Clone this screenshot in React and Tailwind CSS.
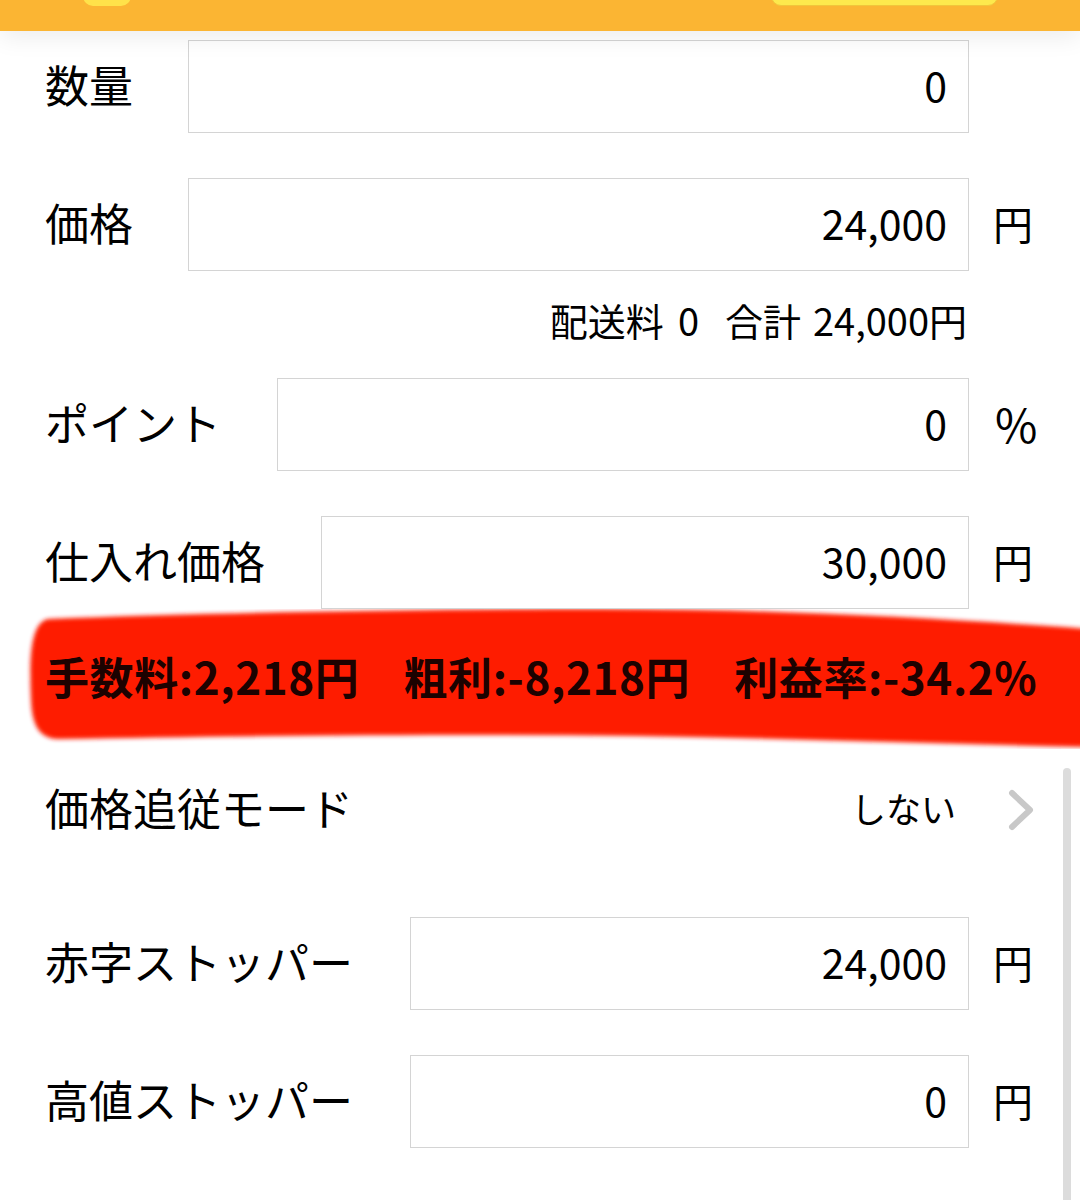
import React from 'react';

const font = { fontFamily: '"Noto Sans CJK JP", "Noto Sans", sans-serif' };

function FieldRow({ label, value, unit, gap = 'ml-[55px]', unitSize = 'text-[40px]', className = '' }) {
    return (
        <div className={`flex items-center pl-[45px] ${className}`}>
            <div className="text-[44px] leading-none text-black whitespace-nowrap mt-[-6px]">{label}</div>
            <div className={`${gap} flex-1 h-[93px] border border-[#d4d4d4] bg-white flex items-center justify-end pr-[21px]`}>
                <span className="text-[41px] leading-none text-black mt-[-4px]">{value}</span>
            </div>
            <div className={`w-[111px] pl-[24px] ${unitSize} leading-none text-black mt-[-4px]`}>{unit}</div>
        </div>
    );
}

export default function App() {
    return (
        <div className="relative w-[1080px] h-[1200px] overflow-hidden bg-white" style={font}>
            {/* Top bar */}
            <div className="relative h-[31px] bg-[#fbb533] shadow-[0_6px_24px_rgba(0,0,0,0.08)]">
                <div className="absolute left-[83px] top-[-14px] w-[48px] h-[20px] rounded-full bg-[#ffe24a]" />
                <div className="absolute left-[771px] top-[-14px] w-[227px] h-[20px] rounded-full bg-[#fde94d] border border-[#f1c63b]" />
            </div>

            <FieldRow label="数量" value="0" unit="" className="mt-[9px]" />
            <FieldRow label="価格" value="24,000" unit="円" className="mt-[45px]" />

            <div className="flex justify-end pr-[113px] h-[107px] items-center">
                <span className="text-[38px] leading-none text-black mt-[-10px] whitespace-nowrap">
                    配送料<span className="inline-block w-[14px]" />0<span className="inline-block w-[26px]" />合計<span className="inline-block w-[12px]" />24,000円
                </span>
            </div>

            <FieldRow label="ポイント" value="0" unit="%" gap="ml-[56px]" unitSize="text-[46px] pl-[26px]" />
            <FieldRow label="仕入れ価格" value="30,000" unit="円" gap="ml-[56px]" className="mt-[45px]" />

            {/* Highlighted fee line */}
            <div className="relative h-[140px] flex items-center pl-[45px]">
                <svg className="absolute left-0 top-0" width="1080" height="140" viewBox="0 0 1080 140">
                    <defs>
                        <filter id="soft" x="-5%" y="-20%" width="110%" height="140%">
                            <feGaussianBlur stdDeviation="2" />
                        </filter>
                    </defs>
                    <path
                        d="M48 10 C 200 4, 420 0, 600 0 C 780 0, 950 10, 1090 20 L 1090 138 C 900 134, 700 126, 500 126 C 320 126, 180 128, 62 130 C 40 131, 32 118, 31 90 C 30 60, 28 14, 48 10 Z"
                        fill="#fe1d00"
                        filter="url(#soft)"
                    />
                </svg>
                <div className="relative flex gap-[44px] text-[44px] font-bold leading-none tracking-[0.6px] text-[#1c0200] whitespace-nowrap mt-[-6px]">
                    <span>手数料:2,218円</span>
                    <span>粗利:-8,218円</span>
                    <span>利益率:-34.2%</span>
                </div>
            </div>

            {/* Price follow mode */}
            <div className="flex items-center pl-[45px] h-[140px] mt-[-9px]">
                <div className="text-[44px] leading-none text-black mt-[-6px]">価格追従モード</div>
                <div className="flex-1" />
                <span className="text-[35px] leading-none text-black mt-[-6px]">しない</span>
                <svg className="ml-[52px] mr-[46px]" width="26" height="42" viewBox="0 0 26 42">
                    <path d="M4 4 L22 21 L4 38" fill="none" stroke="#c8c8c8" strokeWidth="6" strokeLinecap="round" strokeLinejoin="round" />
                </svg>
            </div>

            <FieldRow label="赤字ストッパー" value="24,000" unit="円" gap="ml-[57px]" className="mt-[37px]" />
            <FieldRow label="高値ストッパー" value="0" unit="円" gap="ml-[57px]" className="mt-[45px]" />

            {/* Scroll indicator */}
            <div className="absolute left-[1063px] top-[768px] w-[8px] h-[440px] rounded-full bg-[#dcdcdc]" />
        </div>
    );
}
